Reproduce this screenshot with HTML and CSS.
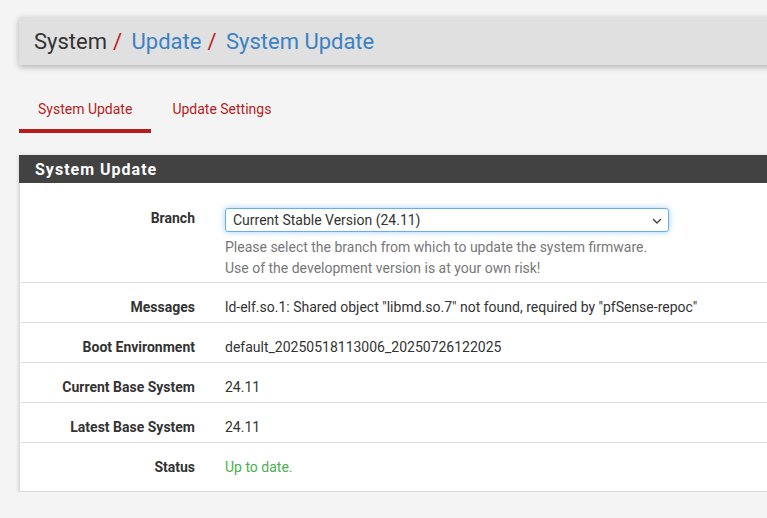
FILE: index.html
```html
<!DOCTYPE html>
<html lang="en">
<head>
<meta charset="utf-8">
<title>System / Update / System Update</title>
<link rel="stylesheet" href="styles.css">
</head>
<body>
<div class="page">
  <header class="crumbbar">
    <h1 class="crumbs">
      <span class="crumb-plain">System</span><span class="sep">/</span>
      <a class="crumb-link" href="#">Update</a><span class="sep">/</span>
      <a class="crumb-link" href="#">System Update</a>
    </h1>
  </header>

  <nav class="tabs">
    <a class="tab tab-active" href="#">System Update</a>
    <a class="tab" href="#">Update Settings</a>
  </nav>

  <section class="panel">
    <h2 class="panel-heading">System Update</h2>
    <div class="panel-body">
      <div class="row row-branch">
        <div class="label">Branch</div>
        <div class="value">
          <div class="select">
            <span>Current Stable Version (24.11)</span>
            <svg class="chev" width="10" height="6" viewBox="0 0 10 6"><path d="M1 1 L5 5 L9 1" fill="none" stroke="#444" stroke-width="1.4"/></svg>
          </div>
          <div class="help">Please select the branch from which to update the system firmware.<br>Use of the development version is at your own risk!</div>
        </div>
      </div>
      <div class="row">
        <div class="label">Messages</div>
        <div class="value">ld-elf.so.1: Shared object "libmd.so.7" not found, required by "pfSense-repoc"</div>
      </div>
      <div class="row">
        <div class="label">Boot Environment</div>
        <div class="value">default_20250518113006_20250726122025</div>
      </div>
      <div class="row">
        <div class="label">Current Base System</div>
        <div class="value">24.11</div>
      </div>
      <div class="row">
        <div class="label">Latest Base System</div>
        <div class="value">24.11</div>
      </div>
      <div class="row row-last">
        <div class="label">Status</div>
        <div class="value ok">Up to date.</div>
      </div>
    </div>
  </section>
</div>
</body>
</html>
```

FILE: styles.css
```css
html, body {
  margin: 0;
  padding: 0;
  overflow: hidden;
  background: #f4f4f4;
}
body {
  font-family: Roboto, "Liberation Sans", Arial, sans-serif;
  font-size: 14px;
  color: #333;
}
.page {
  padding: 17px 0 0 19px;
  width: 1160px;
}
.crumbbar {
  background: #e0e0e0;
  height: 48px;
  box-shadow: 0 2px 6px rgba(0, 0, 0, 0.28);
  display: flex;
  align-items: center;
  padding-left: 15px;
}
.crumbs {
  margin: 2px 0 0;
  font-size: 22px;
  font-weight: 400;
  line-height: 26px;
  color: #333;
  white-space: nowrap;
}
.crumb-link {
  color: #3a82c4;
  text-decoration: none;
}
.sep {
  color: #c0201d;
  margin-left: 6px;
  margin-right: 4px;
}
.tabs {
  display: flex;
  margin-top: 25px;
  height: 43px;
}
.tab {
  display: block;
  padding: 9px 19px 0;
  margin-right: 2px;
  color: #b71c1c;
  text-decoration: none;
  line-height: 21px;
  box-sizing: border-box;
  height: 43px;
}
.tab-active {
  border-bottom: 4px solid #b71c1c;
}
.panel {
  margin-top: 22px;
  background: #fff;
  border: 1px solid #dcdcdc;
  border-top: none;
  box-shadow: 0 1px 4px rgba(0, 0, 0, 0.18);
}
.panel-heading {
  margin: 0 -1px;
  background: #424242;
  color: #fff;
  font-size: 16px;
  font-weight: 700;
  letter-spacing: 1px;
  height: 28px;
  line-height: 30px;
  padding-left: 16px;
}
.row {
  display: grid;
  grid-template-columns: 190px 1fr;
  padding: 14px 0 5px;
  line-height: 20px;
  border-top: 1px solid #e0e0e0;
}
.panel-body .row:first-child {
  border-top: none;
}
.row-branch {
  padding: 25px 0 3px;
}
.row-last {
  padding-bottom: 14px;
}
.label {
  text-align: right;
  padding-right: 15px;
  font-weight: 700;
  color: #333;
}
.value {
  padding-left: 15px;
  color: #333;
}
.select {
  width: 444px;
  height: 24px;
  box-sizing: border-box;
  border: 1px solid #66afe9;
  border-radius: 3px;
  box-shadow: 0 0 6px rgba(102, 175, 233, 0.6);
  background: #fff;
  display: flex;
  align-items: center;
  justify-content: space-between;
  padding: 0 6px 0 7px;
  color: #333;
}
.chev {
  margin-top: 1px;
}
.help {
  color: #777;
  line-height: 21px;
  margin-top: 5px;
}
.ok {
  color: #4cae50;
}
```
